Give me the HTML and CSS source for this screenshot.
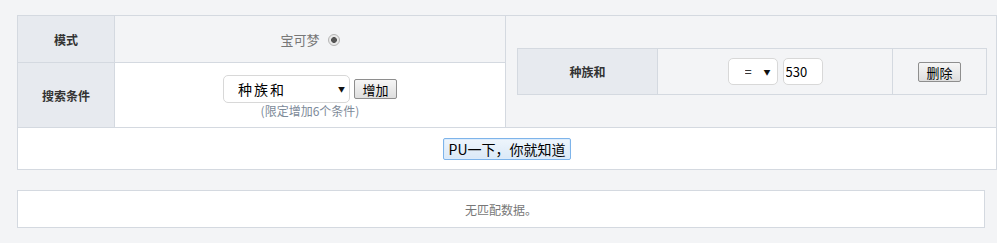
FILE: index.html
```html
<!DOCTYPE html>
<html lang="zh-CN">
<head>
    <meta charset="UTF-8">
    <title>宝可梦搜索</title>
    <link rel="stylesheet" href="styles.css">
</head>
<body>
    <form class="search-form">
        <table class="search-table">
            <colgroup>
                <col class="col-label">
                <col class="col-value">
                <col class="col-cond">
            </colgroup>
            <tr class="row-mode">
                <th>模式</th>
                <td class="mode-cell">
                    <label class="mode-option">宝可梦 <input type="radio" name="mode" checked></label>
                </td>
                <td class="cond-cell" rowspan="2">
                    <table class="cond-table">
                        <tr>
                            <th>种族和</th>
                            <td class="cond-value">
                                <span class="select-wrap small">
                                    <select>
                                        <option>=</option>
                                    </select>
                                </span>
                                <input type="text" class="cond-input" value="530">
                            </td>
                            <td class="cond-action">
                                <button type="button" class="btn">删除</button>
                            </td>
                        </tr>
                    </table>
                </td>
            </tr>
            <tr class="row-filter">
                <th>搜索条件</th>
                <td class="filter-cell">
                    <div class="filter-line">
                        <span class="select-wrap large">
                            <select>
                                <option>种族和</option>
                            </select>
                        </span>
                        <button type="button" class="btn">增加</button>
                    </div>
                    <p class="hint">(限定增加6个条件)</p>
                </td>
            </tr>
            <tr class="row-submit">
                <td colspan="3">
                    <button type="submit" class="btn-submit">PU一下，你就知道</button>
                </td>
            </tr>
        </table>
    </form>
    <div class="result-box">无匹配数据。</div>
</body>
</html>
```

FILE: styles.css
```css
* {
    margin: 0;
    padding: 0;
    box-sizing: border-box;
    font-family: "Noto Sans CJK SC", "Liberation Sans", sans-serif;
}
body {
    background-color: #f3f4f6;
    color: #333;
    font-size: 12px;
    padding: 15px 0 0 17px;
}
/* Tabela principal */
.search-table {
    width: 980px;
    border-collapse: collapse;
    table-layout: fixed;
}
.search-table > tbody > tr > th,
.search-table > tbody > tr > td {
    border: 1px solid #d4d9e0;
    text-align: center;
    vertical-align: middle;
}
.col-label {
    width: 97px;
}
.col-value {
    width: 391px;
}
.search-table th {
    background-color: #e7eaef;
    font-weight: bold;
    color: #333;
}
.row-mode {
    height: 47px;
}
.row-filter {
    height: 65px;
}
.row-submit {
    height: 42px;
}
.mode-cell {
    background-color: #f3f4f6;
}
.mode-option {
    color: #777;
    font-size: 13px;
    display: inline-flex;
    align-items: center;
    gap: 8px;
}
.mode-option input {
    appearance: none;
    width: 12px;
    height: 12px;
    border-radius: 50%;
    border: 1px solid #b5b5b5;
    background: radial-gradient(circle, #555 0 2.6px, #e9e9e9 3.2px);
    margin-top: 2px;
}
.filter-cell {
    background-color: #fff;
    padding-top: 2px;
}
.filter-line {
    display: flex;
    justify-content: center;
    align-items: center;
    gap: 4px;
}
.hint {
    color: #7d8a99;
    margin-top: 1px;
    line-height: 14px;
}
/* Selects */
.select-wrap {
    position: relative;
    display: inline-block;
}
.select-wrap select {
    appearance: none;
    background-color: #fff;
    border: 1px solid #d8d8d8;
    color: #000;
    outline: none;
}
.select-wrap::after {
    content: "▼";
    position: absolute;
    top: 50%;
    transform: translateY(-50%);
    font-size: 7px;
    color: #111;
    pointer-events: none;
}
.select-wrap.large select {
    width: 127px;
    height: 28px;
    border-radius: 5px;
    padding-left: 14px;
    font-size: 14px;
    letter-spacing: 2px;
}
.select-wrap.large::after {
    right: 5px;
}
.select-wrap.small select {
    width: 50px;
    height: 27px;
    border-radius: 5px;
    padding-left: 16px;
    font-size: 13px;
}
.select-wrap.small::after {
    right: 7px;
}
.btn {
    min-width: 43px;
    height: 20px;
    padding: 0 6px;
    font-size: 13px;
    color: #000;
    border: 1px solid #8e8e8e;
    border-radius: 2px;
    background: linear-gradient(#f6f6f6, #dedede);
}
/* Condicoes */
.cond-cell {
    background-color: #f3f4f6;
    padding: 0 10px 0 11px;
}
.cond-table {
    width: 470px;
    height: 47px;
    border-collapse: collapse;
    table-layout: fixed;
}
.cond-table th,
.cond-table td {
    border: 1px solid #d4d9e0;
    text-align: center;
    vertical-align: middle;
}
.cond-table th {
    width: 140px;
}
.cond-table .cond-action {
    width: 94px;
}
.cond-value {
    font-size: 0;
}
.cond-input {
    width: 40px;
    height: 27px;
    margin-left: 5px;
    border: 1px solid #d8d8d8;
    border-radius: 5px;
    padding-left: 2px;
    font-size: 13px;
    color: #000;
    vertical-align: top;
    outline: none;
}
.cond-value .select-wrap {
    vertical-align: top;
}
.row-submit td {
    background-color: #fff;
}
.btn-submit {
    width: 128px;
    height: 22px;
    font-size: 14px;
    color: #000;
    border: 1px solid #7eb4ea;
    border-radius: 2px;
    background: linear-gradient(#eef5fc, #dbe9f7);
    box-shadow: inset 0 0 0 1px #dcecfc;
}
/* Resultado */
.result-box {
    width: 968px;
    height: 38px;
    margin-top: 20px;
    background-color: #fff;
    border: 1px solid #d4d9e0;
    color: #777;
    display: flex;
    align-items: center;
    justify-content: center;
}
```
